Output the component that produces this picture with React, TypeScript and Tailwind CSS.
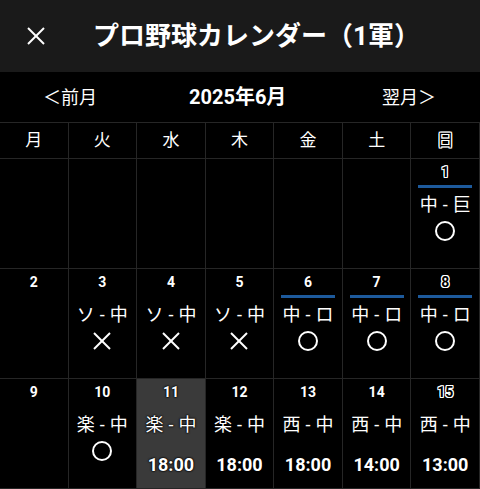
const FONT = "font-['Roboto','Noto_Sans_CJK_JP',sans-serif]";

type Day = {
  date: number;
  game?: [string, string];
  mark?: string;
  time?: string;
  home?: boolean;
  today?: boolean;
  sunday?: boolean;
};

const weekdays = ["月", "火", "水", "木", "金", "土", "日"];

const weeks: (Day | null)[][] = [
  [null, null, null, null, null, null, { date: 1, game: ["中", "巨"], mark: "○", home: true, sunday: true }],
  [
    { date: 2 },
    { date: 3, game: ["ソ", "中"], mark: "×" },
    { date: 4, game: ["ソ", "中"], mark: "×" },
    { date: 5, game: ["ソ", "中"], mark: "×" },
    { date: 6, game: ["中", "ロ"], mark: "○", home: true },
    { date: 7, game: ["中", "ロ"], mark: "○", home: true },
    { date: 8, game: ["中", "ロ"], mark: "○", home: true, sunday: true },
  ],
  [
    { date: 9 },
    { date: 10, game: ["楽", "中"], mark: "○" },
    { date: 11, game: ["楽", "中"], time: "18:00", today: true },
    { date: 12, game: ["楽", "中"], time: "18:00" },
    { date: 13, game: ["西", "中"], time: "18:00" },
    { date: 14, game: ["西", "中"], time: "14:00" },
    { date: 15, game: ["西", "中"], time: "13:00", sunday: true },
  ],
];

const outline =
  "text-black [text-shadow:1px_0_0_#fff,-1px_0_0_#fff,0_1px_0_#fff,0_-1px_0_#fff,1px_1px_0_#fff,-1px_-1px_0_#fff,1px_-1px_0_#fff,-1px_1px_0_#fff]";
const todayText = "[text-shadow:0_0_2px_#000,0_0_2px_#000,0_0_1px_#000]";

function Cell({ day }: { day: Day | null }) {
  if (!day) return <div className="h-[110px] border-r border-b border-[#262626]" />;
  return (
    <div
      className={`flex h-[110px] flex-col items-center border-r border-b border-[#262626] pt-[3px] text-white ${
        day.today ? `bg-[#3a3a3a] ${todayText}` : ""
      }`}
    >
      <div className={`h-[20px] text-[14px] leading-[20px] font-bold ${day.sunday ? outline : ""}`}>
        {day.date}
      </div>
      <div className="flex h-[10px] w-full justify-center">
        {day.home ? <div className="mt-[3px] h-[3px] w-[54px] bg-[#1d5a9c]" /> : null}
      </div>
      {day.game ? (
        <div className="flex h-[26px] items-center gap-[5px] text-[18px] leading-[26px]">
          <span>{day.game[0]}</span>
          <span>-</span>
          <span>{day.game[1]}</span>
        </div>
      ) : null}
      {day.mark === "○" ? (
        <div className="flex h-[26px] items-center justify-center">
          <div className="h-[20px] w-[20px] rounded-full border-2 border-white" />
        </div>
      ) : null}
      {day.mark === "×" ? (
        <div className="flex h-[26px] items-center justify-center">
          <svg width="20" height="20" viewBox="0 0 20 20" stroke="white" strokeWidth="2">
            <line x1="2" y1="2" x2="18" y2="18" />
            <line x1="18" y1="2" x2="2" y2="18" />
          </svg>
        </div>
      ) : null}
      {day.time ? (
        <div className="mt-[14px] h-[26px] text-[18px] leading-[26px] font-bold">{day.time}</div>
      ) : null}
    </div>
  );
}

export default function App() {
  return (
    <div className={`h-[489px] w-[480px] overflow-hidden bg-black text-white ${FONT}`}>
      <div className="flex h-[72px] items-center bg-[#1a1a1a]">
        <div className="ml-[27px] flex h-[18px] w-[18px] items-center justify-center">
          <svg width="18" height="18" viewBox="0 0 18 18" stroke="white" strokeWidth="2">
            <line x1="1" y1="1" x2="17" y2="17" />
            <line x1="17" y1="1" x2="1" y2="17" />
          </svg>
        </div>
        <div className="ml-[48px] text-[26px] font-bold">プロ野球カレンダー（1軍）</div>
      </div>
      <div className="flex h-[50px] items-center">
        <div className="ml-[43px] text-[18px]">＜前月</div>
        <div className="ml-[92px] text-[20px] font-bold">2025年6月</div>
        <div className="ml-auto mr-[44px] text-[18px]">翌月＞</div>
      </div>
      <div className="grid grid-cols-7 border-t border-[#262626]">
        {weekdays.map((w, i) => (
          <div
            key={w}
            className={`flex h-[36px] items-center justify-center border-r border-b border-[#262626] text-[17px] ${
              i === 6 ? outline : ""
            }`}
          >
            {w}
          </div>
        ))}
        {weeks.flat().map((d, i) => (
          <Cell key={i} day={d} />
        ))}
      </div>
    </div>
  );
}
